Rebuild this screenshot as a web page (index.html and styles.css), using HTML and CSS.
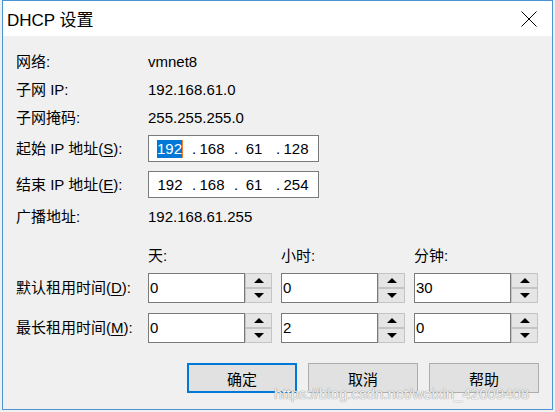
FILE: index.html
```html
<!DOCTYPE html>
<html lang="zh-CN">
<head>
<meta charset="utf-8">
<title>DHCP 设置</title>
<link rel="stylesheet" href="styles.css">
</head>
<body>
<div class="window">
  <div class="titlebar">
    <span class="title">DHCP 设置</span>
    <svg class="close" width="16" height="16" viewBox="0 0 16 16"><path d="M0.5 0.5 L15.5 15.5 M15.5 0.5 L0.5 15.5" stroke="#000" stroke-width="1" fill="none"/></svg>
  </div>
  <div class="content">
    <div class="row"><span class="lbl">网络:</span><span>vmnet8</span></div>
    <div class="row"><span class="lbl">子网 IP:</span><span>192.168.61.0</span></div>
    <div class="row"><span class="lbl">子网掩码:</span><span>255.255.255.0</span></div>
    <div class="row row-ip1"><span class="lbl">起始 IP 地址(<u>S</u>):</span>
      <div class="ipbox">
        <span class="oct"><span class="sel">192</span></span><span class="dot">.</span><span class="oct">168</span><span class="dot">.</span><span class="oct">61</span><span class="dot">.</span><span class="oct">128</span>
      </div>
    </div>
    <div class="row row-ip2"><span class="lbl">结束 IP 地址(<u>E</u>):</span>
      <div class="ipbox">
        <span class="oct">192</span><span class="dot">.</span><span class="oct">168</span><span class="dot">.</span><span class="oct">61</span><span class="dot">.</span><span class="oct">254</span>
      </div>
    </div>
    <div class="row row-bc"><span class="lbl">广播地址:</span><span>192.168.61.255</span></div>

    <div class="lease">
      <span></span><span class="hdr">天:</span><span class="hdr">小时:</span><span class="hdr">分钟:</span>
      <span class="llbl">默认租用时间(<u>D</u>):</span>
      <div class="spin"><div class="spin-input">0</div><div class="spin-btns"><span class="sb"><i class="up"></i></span><span class="sb"><i class="down"></i></span></div></div>
      <div class="spin"><div class="spin-input">0</div><div class="spin-btns"><span class="sb"><i class="up"></i></span><span class="sb"><i class="down"></i></span></div></div>
      <div class="spin"><div class="spin-input">30</div><div class="spin-btns"><span class="sb"><i class="up"></i></span><span class="sb"><i class="down"></i></span></div></div>
      <span class="llbl">最长租用时间(<u>M</u>):</span>
      <div class="spin"><div class="spin-input">0</div><div class="spin-btns"><span class="sb"><i class="up"></i></span><span class="sb"><i class="down"></i></span></div></div>
      <div class="spin"><div class="spin-input">2</div><div class="spin-btns"><span class="sb"><i class="up"></i></span><span class="sb"><i class="down"></i></span></div></div>
      <div class="spin"><div class="spin-input">0</div><div class="spin-btns"><span class="sb"><i class="up"></i></span><span class="sb"><i class="down"></i></span></div></div>
    </div>

    <div class="buttons">
      <button class="btn btn-default">确定</button>
      <button class="btn">取消</button>
      <button class="btn">帮助</button>
    </div>
  </div>
  <div class="watermark">https://blog.csdn.net/weixin_42009408</div>
</div>
</body>
</html>
```

FILE: styles.css
```css
html, body {
  margin: 0;
  padding: 0;
  background: #f0f0f0;
}
body {
  font-family: "Liberation Sans", "Noto Sans CJK SC", sans-serif;
  font-size: 15px;
  color: #000;
}
.window {
  position: relative;
  width: 551px;
  height: 410px;
  margin-left: 2px;
  border: 1px solid #4a94d4;
  box-sizing: border-box;
  background: #f0f0f0;
  display: flex;
  flex-direction: column;
}
.titlebar {
  height: 35px;
  background: #fff;
  display: flex;
  align-items: center;
  padding-left: 4px;
  padding-right: 15px;
  flex: none;
}
.title {
  font-size: 17px;
}
.close {
  margin-left: auto;
  display: block;
}
.content {
  padding: 12px 13px 0 13px;
}
.row {
  display: flex;
  align-items: center;
  height: 28px;
  line-height: 18px;
}
.lbl {
  width: 132px;
  flex: none;
}
u {
  text-decoration-thickness: 1px;
  text-underline-offset: 2px;
}
.row-ip1 { height: 27px; margin-top: 3px; }
.row-ip2 { height: 27px; margin-top: 9px; }
.row-bc { margin-top: 5px; }
.ipbox {
  width: 171px;
  height: 27px;
  box-sizing: border-box;
  border: 1px solid #7a7a7a;
  background: #fff;
  display: flex;
  align-items: center;
  padding-left: 2px;
}
.oct {
  width: 38px;
  text-align: center;
  flex: none;
}
.dot {
  width: 4px;
  flex: none;
  text-indent: 3px;
  white-space: nowrap;
}
.sel {
  background: #0078d7;
  color: #fff;
  border-right: 1px solid #ff7f27;
  display: inline-block;
  line-height: 18px;
}
.lease {
  display: grid;
  grid-template-columns: 123px repeat(3, 124px);
  grid-template-rows: 24px 35px 40px;
  column-gap: 9px;
  align-items: end;
  margin-top: 13px;
}
.hdr {
  line-height: 24px;
  height: 24px;
}
.llbl {
  line-height: 30px;
  height: 30px;
  white-space: nowrap;
}
.spin {
  display: flex;
  height: 30px;
}
.spin-input {
  flex: 1;
  border: 1px solid #7a7a7a;
  background: #fff;
  padding-left: 1px;
  line-height: 28px;
}
.spin-btns {
  width: 27px;
  display: flex;
  flex-direction: column;
}
.sb {
  height: 15px;
  box-sizing: border-box;
  border: 1px solid #c4c4c4;
  background: #e5e5e5;
  display: flex;
  align-items: center;
  justify-content: center;
}
.up {
  width: 0;
  height: 0;
  border-left: 5px solid transparent;
  border-right: 5px solid transparent;
  border-bottom: 5px solid #000;
}
.down {
  width: 0;
  height: 0;
  border-left: 5px solid transparent;
  border-right: 5px solid transparent;
  border-top: 5px solid #000;
}
.buttons {
  display: flex;
  justify-content: flex-end;
  gap: 11px;
  margin-top: 20px;
}
.btn {
  width: 110px;
  height: 30px;
  box-sizing: border-box;
  border: 1px solid #adadad;
  background: #e1e1e1;
  font-family: "Liberation Sans", "Noto Sans CJK SC", sans-serif;
  font-size: 15px;
  color: #000;
  padding: 0;
}
.btn-default {
  border: 2px solid #0078d7;
}
.watermark {
  position: absolute;
  left: 271px;
  top: 384px;
  font-size: 15px;
  color: rgba(255, 255, 255, 0.85);
  text-shadow: 0 0 1px #9a9a9a, 0 0 1px #9a9a9a;
  white-space: nowrap;
}
```
